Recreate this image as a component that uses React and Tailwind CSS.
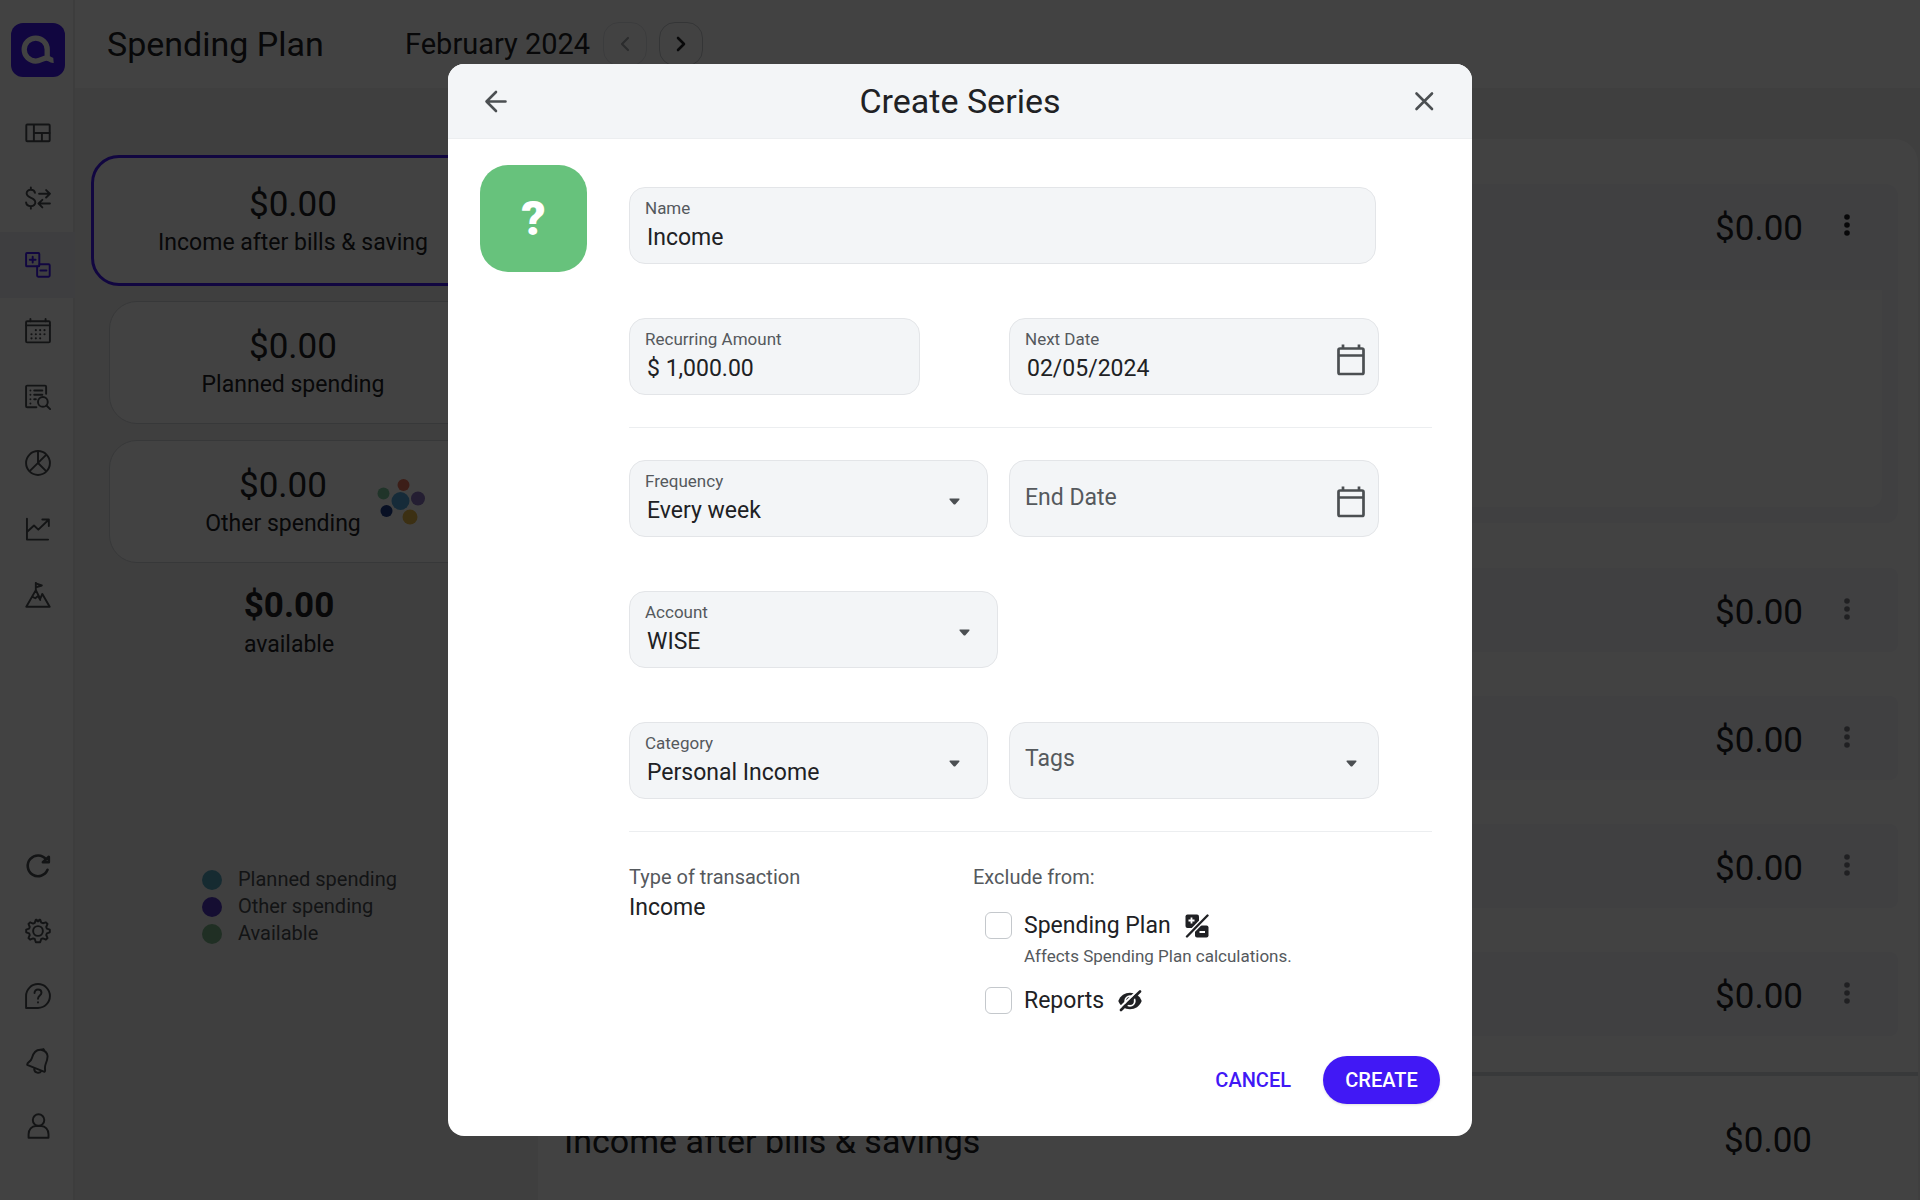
const money = '$0.00';

function Icon({ children, className = 'size-6' }) {
    return (
        <svg viewBox="0 0 24 24" fill="none" stroke="currentColor" strokeWidth="1.8" strokeLinecap="round" strokeLinejoin="round" className={className} aria-hidden="true">
            {children}
        </svg>
    );
}

function Logo() {
    return (
        <svg viewBox="0 0 54 54" className="size-[54px]" aria-hidden="true">
            <rect width="54" height="54" rx="12" fill="#4118f5" />
            <path d="M36.200 26.600a11.500 11.500 0 1 0-11.500 11.500c5 0 7.300-3.300 11.300-3.100 2.700.2 3.300 2.700 6.500 2.400M36.200 26.600v9" fill="none" stroke="#fff" strokeWidth="5.300" />
        </svg>
    );
}

const topNav = [
    {
        label: 'Dashboard',
        icon: <><rect x="1.200" y="4.200" width="21.600" height="15.400" rx="0.800" /><path d="M8.200 4.500v15M8.200 12h14.500M15.600 12v7.500" /></>,
    },
    {
        label: 'Transactions',
        icon: <><path d="M9.200 6.300C8.900 4.400 7.500 3.500 5.400 3.500 3.100 3.500 1.500 4.800 1.500 6.800c0 5 8 3.400 8 8.300 0 2.200-1.700 3.500-4.100 3.500S1.200 17.300 1 15.200M5.400 1.400v2.100M5.400 18.600v2.300M13 7.200h10M19.500 3.800 23 7.200l-3.500 3.400M23 16.200H12.700M16 12.800l-3.500 3.400 3.500 3.500" /></>,
    },
    {
        label: 'Spending Plan',
        active: true,
        icon: <><rect x="1" y="1" width="12.200" height="12.200" rx="0.800" /><path d="M7.100 4.400v5.400M4.400 7.100h5.400M13.400 11.300h8.400a1 1 0 0 1 1 1V21.800a1 1 0 0 1-1 1H12.200a1 1 0 0 1-1-1v-8.400M14.200 17h5.600" /></>,
    },
    {
        label: 'Bills',
        icon: <><rect x="1" y="3" width="22" height="19.500" rx="1" /><path d="M1 6.800h22M5 1v2M19 1v2" /><path d="M10 11.200h.01M14 11.200h.01M18 11.200h.01M6 15h.01M10 15h.01M14 15h.01M18 15h.01M6 18.800h.01M10 18.800h.01M14 18.800h.01" strokeWidth="2" /></>,
    },
    {
        label: 'Register',
        icon: <><path d="M10.500 21.500H2a1 1 0 0 1-1-1v-18a1 1 0 0 1 1-1h16.500a1 1 0 0 1 1 1V9" /><path d="M5 6h.01M8.500 6h7.500M5 10h.01M8.500 10h7.500M5 14h.01M8.500 14h1.500M5 18h.01" /><circle cx="16.500" cy="16.500" r="4.500" /><path d="m19.800 19.800 3.400 3.400" /></>,
    },
    {
        label: 'Reports',
        icon: <><circle cx="12" cy="12" r="11" /><path d="M12 1v11M19.500 4.500 4.300 19.500M12 12l7.500 7.500" /></>,
    },
    {
        label: 'Investments',
        icon: <><path d="M1.800 2.500v19.300h19.500M2 14.500 8.300 8.800l4 3.800 9.500-9.200M16 3.200h6v6" /></>,
    },
    {
        label: 'Goals',
        icon: <><path d="M10 7.500 1.200 22.800h21.600L16 11l-2 4.500-4-8V.8M10 1.200l5.500 2L10 5M6.500 13.500l3 1.500 2.500-2 2 3.500" /></>,
    },
];

const bottomNav = [
    { label: 'Refresh', icon: <path d="M20.800 15.500A9.500 9.500 0 1 1 19.500 6M22 3.500v5h-5.500z" strokeWidth="2.400" /> },
    {
        label: 'Settings',
        icon: <><circle cx="12" cy="12" r="4.500" /><path d="M10 1.500h.8L11.500 3h1l.7-1.500h.8l1 2.700 1.500.6L19.300 4l1.500 1.500-1.200 2.800.6 1.500 2.700 1v2.400l-2.700 1-.6 1.500 1.200 2.800-1.500 1.500-2.800-1.200-1.500.6-1 3h-4l-1-3-1.500-.6L4.700 20l-1.500-1.500 1.200-2.800-.6-1.500-2.700-1v-2.400l2.700-1 .6-1.500-1.200-2.800L4.700 4l2.800 1.200L9 4.500z" /></>,
    },
    {
        label: 'Help',
        icon: <><path d="M12 1a11 11 0 1 1 0 22H1V12A11 11 0 0 1 12 1z" /><path d="M8.800 9.300c0-2 1.300-3.300 3.200-3.300s3.200 1.200 3.200 3c0 2.500-3.200 2.700-3.200 5.500M12 17.800v.2" /></>,
    },
    {
        label: 'Notifications',
        icon: <><path d="M15.500 1.800C10 1 7.500 5 6.300 9.500 5.500 12.800 1.800 13 2 15.500L18 22c1.500-.8-.5-3 1-7 2-5 4-11-3.500-13.200zM15 1.600l2-.6 1 1.600M8.500 19.500c.2 3.600 5 4.400 6.500 1.800" /></>,
    },
    { label: 'Profile', icon: <><circle cx="12.500" cy="6.500" r="5.300" /><path d="M3.300 22.800v-3.300c0-4 3-7.500 6.700-7.500h5c3.700 0 6.700 3.500 6.700 7.500v3.300z" /></> },
];

function NavItem({ item, height }) {
    return (
        <a
            href="#"
            aria-label={item.label}
            className={`flex w-full items-center justify-center ${height} ${item.active ? 'bg-[#efeef7] text-[#4118f5]' : 'text-[#4b4f52]'}`}
        >
            <Icon className="size-[26px]">{item.icon}</Icon>
        </a>
    );
}

function Sidebar() {
    return (
        <nav className="flex w-[75px] shrink-0 flex-col items-center bg-white pt-[23px] pb-[42px] shadow-[inset_-2px_0_#ebebeb]">
            <Logo />
            <div className="mt-[23px] w-full">
                {topNav.map((item) => <NavItem key={item.label} item={item} height="h-[66px]" />)}
            </div>
            <div className="mt-auto w-full">
                {bottomNav.map((item) => <NavItem key={item.label} item={item} height="h-[65px]" />)}
            </div>
        </nav>
    );
}

function Bubbles() {
    return (
        <svg viewBox="0 0 48 48" className="size-12" aria-hidden="true">
            <circle cx="26.500" cy="7" r="6" fill="#e8735c" />
            <circle cx="6.500" cy="15.500" r="6" fill="#7ec8a0" />
            <circle cx="23.500" cy="23" r="9" fill="#55a8dc" />
            <circle cx="41" cy="20.500" r="7" fill="#8a74c0" />
            <circle cx="9.500" cy="33" r="6" fill="#1f3f8c" />
            <circle cx="33" cy="39" r="7.500" fill="#e8b84a" />
        </svg>
    );
}

function SummaryCard({ label, selected, art }) {
    return (
        <button
            type="button"
            className={selected
                ? 'flex h-[131px] w-[404px] items-center justify-center rounded-[28px] border-[3px] border-[#4118f5] bg-white'
                : `ml-[18px] flex h-[123px] w-[368px] items-center justify-center gap-4 rounded-[28px] border border-[#d4d6da] bg-white ${art ? 'pl-11' : ''}`}
        >
            <span className="block pt-1 text-center">
                <span className="block text-[35px] leading-10">{money}</span>
                <span className="block text-[23px] leading-9">{label}</span>
            </span>
            {art}
        </button>
    );
}

function Dots() {
    return (
        <svg viewBox="0 0 6 24" fill="currentColor" className="h-6 w-1.5" aria-hidden="true">
            <circle cx="3" cy="4" r="2.800" />
            <circle cx="3" cy="12" r="2.800" />
            <circle cx="3" cy="20" r="2.800" />
        </svg>
    );
}

function PlanRow({ tall }) {
    return (
        <div className={`flex items-start justify-end gap-[41px] pt-[22px] pr-12 ${tall ? 'h-[106px]' : 'h-[84px] rounded-lg bg-[#f6f6fb]'}`}>
            <span className="text-[35px] leading-[46px]">{money}</span>
            <button type="button" aria-label="More options" className={`mt-[7px] ${tall ? 'text-[#202124]' : 'text-[#7b7e83]'}`}>
                <Dots />
            </button>
        </div>
    );
}

const legend = [
    { label: 'Planned spending', color: 'bg-[#56a5bf]' },
    { label: 'Other spending', color: 'bg-[#5236c0]' },
    { label: 'Available', color: 'bg-[#7cb58b]' },
];

function SpendingPlan() {
    return (
        <div className="flex min-w-0 flex-1 flex-col">
            <header className="flex h-[88px] shrink-0 items-center bg-white px-8">
                <h1 className="w-[298px] text-[34px]">Spending Plan</h1>
                <span className="w-[198px] pt-0.5 text-[29px] whitespace-nowrap">February 2024</span>
                <button type="button" disabled aria-label="Previous month" className="flex size-11 items-center justify-center rounded-2xl border border-[#e4e6ea] text-[#a6a9ad]">
                    <Icon><path d="m15 6-6 6 6 6" strokeWidth="2.200" /></Icon>
                </button>
                <button type="button" aria-label="Next month" className="ml-3 flex size-11 items-center justify-center rounded-2xl border border-[#c8ccd0]">
                    <Icon><path d="m9 6 6 6-6 6" strokeWidth="2.600" /></Icon>
                </button>
            </header>
            <div className="flex min-h-0 flex-1">
                <section className="w-[463px] shrink-0 pt-[67px] pl-4">
                    <SummaryCard label="Income after bills & saving" selected />
                    <div className="mt-[15px] space-y-4">
                        <SummaryCard label="Planned spending" />
                        <SummaryCard label="Other spending" art={<Bubbles />} />
                    </div>
                    <div className="mt-5 w-[396px] text-center">
                        <p className="text-[35px] leading-[46px] font-bold">{money}</p>
                        <p className="text-[23px] leading-8">available</p>
                    </div>
                    <ul className="mt-[205px] ml-[111px] text-[20px] leading-[27px] text-[#4b4f52]">
                        {legend.map((item) => (
                            <li key={item.label} className="flex items-center gap-4">
                                <span className={`size-5 rounded-full ${item.color}`} />
                                {item.label}
                            </li>
                        ))}
                    </ul>
                </section>
                <section className="mt-[51px] mr-0.5 flex min-w-0 flex-1 flex-col rounded-t-3xl bg-white">
                    <div className="pt-[45px] pr-5 pl-[22px]">
                        <div className="rounded-xl bg-[#f6f6fb] px-4 pb-4">
                            <div className="-mr-4"><PlanRow tall /></div>
                            <div className="h-[217px] rounded-b-xl bg-white" />
                        </div>
                        <div className="mt-[45px] space-y-11">
                            <PlanRow />
                            <PlanRow />
                            <PlanRow />
                            <PlanRow />
                        </div>
                    </div>
                    <div className="mt-auto flex h-[128px] items-center justify-between border-t-4 border-[#d9dcde] pt-1.5 pr-[106px] pl-[26px]">
                        <span className="text-[34px]">Income after bills &amp; savings</span>
                        <span className="text-[35px]">{money}</span>
                    </div>
                </section>
            </div>
        </div>
    );
}

const boxClass = 'relative flex h-[77px] items-center rounded-2xl border border-[#e3e5e8] bg-[#f3f5f7]';
const labelClass = 'absolute top-[10px] left-[15px] text-[17px] leading-5 text-[#55595d]';
const inputClass = 'h-full w-full bg-transparent pt-6 pl-[17px] text-[23px] text-[#202124] outline-none';
const selectClass = 'h-full w-full appearance-none bg-transparent pt-[26px] pl-[17px] text-[23px] text-[#202124] outline-none';
const emptyClass = 'h-full w-full appearance-none bg-transparent pb-0.5 pl-[15px] text-[23px] text-[#55595d] placeholder:text-[#55595d] outline-none';

function CalendarIcon() {
    return (
        <svg viewBox="0 0 28 32" fill="none" stroke="#4b4f52" strokeWidth="2.700" className="mt-1.5 h-8 w-7 shrink-0" aria-hidden="true">
            <rect x="1.500" y="4.500" width="25" height="25.500" rx="1.500" />
            <path d="M1.500 11.500h25M6 .5v4M22 .5v4" />
        </svg>
    );
}

function Caret({ className = 'right-[27px]' }) {
    return (
        <svg viewBox="0 0 12 8" fill="#4b4f52" className={`pointer-events-none absolute top-[37px] h-[7px] w-[11px] ${className}`} aria-hidden="true">
            <path d="M1 .5h10c.8 0 1 .8.5 1.500L7 7c-.6.700-1.400.700-2 0L.5 2C0 1.300.2.500 1 .5z" />
        </svg>
    );
}

function SelectField({ id, label, value, width }) {
    return (
        <div className={`${boxClass} ${width}`}>
            <label htmlFor={id} className={labelClass}>{label}</label>
            <select id={id} defaultValue={value} className={selectClass}>
                <option>{value}</option>
            </select>
            <Caret />
        </div>
    );
}

function ExcludeOption({ id, label, icon }) {
    return (
        <div className="flex h-9 items-center">
            <input id={id} type="checkbox" className="size-[27px] appearance-none rounded-md border border-[#c4c8cc] bg-white checked:bg-[#4118f5]" />
            <label htmlFor={id} className="ml-3 flex items-center gap-3.5 pt-0.5 text-[23px]">
                {label}
                {icon}
            </label>
        </div>
    );
}

function PlanOffIcon() {
    return (
        <svg viewBox="0 0 24 24" className="size-6" aria-hidden="true">
            <rect x="0.500" y="0.500" width="13.500" height="13.500" rx="2" fill="#202124" />
            <rect x="10" y="11.500" width="13.500" height="12" rx="2" fill="#202124" />
            <path d="M22.500 1.500 2 22.500" stroke="#fff" strokeWidth="5" />
            <path d="M6.500 3.500v6M3.500 6.500h6M14.500 18h5.500" stroke="#fff" strokeWidth="1.800" />
            <path d="M22.500 1.500 2 22.500" stroke="#202124" strokeWidth="2.400" strokeLinecap="round" />
        </svg>
    );
}

function EyeOffIcon() {
    return (
        <svg viewBox="0 0 24 22" className="h-[22px] w-6" aria-hidden="true">
            <path d="M.3 11C2.500 5.500 6.800 2.800 12 2.800S21.500 5.500 23.700 11C21.500 16.500 17.200 19.200 12 19.200S2.500 16.500.3 11z" fill="#202124" />
            <circle cx="12" cy="11" r="4.800" fill="#202124" stroke="#fff" strokeWidth="1.800" />
            <path d="M20.500 0 1 18.500" stroke="#fff" strokeWidth="2.400" />
            <path d="M22 1.500 3 20" stroke="#202124" strokeWidth="2.600" strokeLinecap="round" />
        </svg>
    );
}

function CreateSeries() {
    return (
        <div role="dialog" aria-labelledby="dialog-title" className="w-[1024px] overflow-hidden rounded-2xl bg-white">
            <div className="flex h-[75px] items-center justify-between border-b border-[#eceef0] bg-[#f3f5f7] px-9">
                <button type="button" aria-label="Back" className="text-[#4b4f52]">
                    <Icon><path d="M21.500 12.500H2.500M12 3l-9.500 9.500L12 22" strokeWidth="2.600" /></Icon>
                </button>
                <h2 id="dialog-title" className="text-[34px]">Create Series</h2>
                <button type="button" aria-label="Close" className="text-[#4b4f52]">
                    <Icon><path d="m4.500 4.500 15.500 15.500M20 4.500 4.500 20" strokeWidth="2.600" /></Icon>
                </button>
            </div>

            <form id="series-form" className="flex px-8 pt-[26px]" onSubmit={(e) => e.preventDefault()}>
                <div className="flex size-[107px] shrink-0 items-center justify-center rounded-[28px] bg-[#67c27c] text-[48px] font-black text-white">?</div>

                <div className="ml-[42px] w-[803px] pt-[22px]">
                    <div className={`${boxClass} w-[747px]`}>
                        <label htmlFor="name" className={labelClass}>Name</label>
                        <input id="name" defaultValue="Income" className={inputClass} />
                    </div>

                    <div className="mt-[54px] flex justify-between pr-[53px]">
                        <div className={`${boxClass} w-[291px]`}>
                            <label htmlFor="amount" className={labelClass}>Recurring Amount</label>
                            <input id="amount" defaultValue="$ 1,000.00" className={inputClass} />
                        </div>
                        <div className={`${boxClass} w-[370px] pr-[13px]`}>
                            <label htmlFor="next-date" className={labelClass}>Next Date</label>
                            <input id="next-date" defaultValue="02/05/2024" className={inputClass} />
                            <CalendarIcon />
                        </div>
                    </div>

                    <hr className="mt-8 border-[#eceef0]" />

                    <div className="mt-8 flex justify-between pr-[53px]">
                        <SelectField id="frequency" label="Frequency" value="Every week" width="w-[359px]" />
                        <div className={`${boxClass} w-[370px] pr-[13px]`}>
                            <input id="end-date" aria-label="End Date" placeholder="End Date" className={emptyClass} />
                            <CalendarIcon />
                        </div>
                    </div>

                    <div className="mt-[54px]">
                        <SelectField id="account" label="Account" value="WISE" width="w-[369px]" />
                    </div>

                    <div className="mt-[54px] flex justify-between pr-[53px]">
                        <SelectField id="category" label="Category" value="Personal Income" width="w-[359px]" />
                        <div className={`${boxClass} w-[370px]`}>
                            <select id="tags" aria-label="Tags" defaultValue="Tags" className={emptyClass}>
                                <option>Tags</option>
                            </select>
                            <Caret className="right-[21px]" />
                        </div>
                    </div>

                    <hr className="mt-8 border-[#eceef0]" />

                    <div className="mt-[30px] flex">
                        <div className="w-[344px]">
                            <p className="text-[20px] leading-[30px] text-[#55595d]">Type of transaction</p>
                            <p className="text-[23px] leading-8">Income</p>
                        </div>
                        <fieldset>
                            <legend className="text-[20px] leading-[30px] text-[#55595d]">Exclude from:</legend>
                            <div className="mt-[15px] pl-3">
                                <ExcludeOption id="exclude-plan" label="Spending Plan" icon={<PlanOffIcon />} />
                                <p className="ml-[39px] text-[17px] leading-[26px] text-[#55595d]">Affects Spending Plan calculations.</p>
                                <div className="mt-[13px]">
                                    <ExcludeOption id="exclude-reports" label="Reports" icon={<EyeOffIcon />} />
                                </div>
                            </div>
                        </fieldset>
                    </div>
                </div>
            </form>

            <div className="mt-[38px] flex justify-end gap-2 px-8 pb-8 text-[20px] font-medium">
                <button type="button" className="h-12 px-6 text-[#4118f5]">CANCEL</button>
                <button type="submit" form="series-form" className="h-12 w-[117px] rounded-full bg-[#4118f5] text-white shadow-sm">CREATE</button>
            </div>
        </div>
    );
}

export default function App() {
    return (
        <div className="relative flex min-h-screen bg-[#f3f3f3] font-[Roboto,sans-serif] text-[#202124]">
            <Sidebar />
            <SpendingPlan />
            <div className="fixed inset-0 flex items-center justify-center bg-black/74">
                <CreateSeries />
            </div>
        </div>
    );
}
